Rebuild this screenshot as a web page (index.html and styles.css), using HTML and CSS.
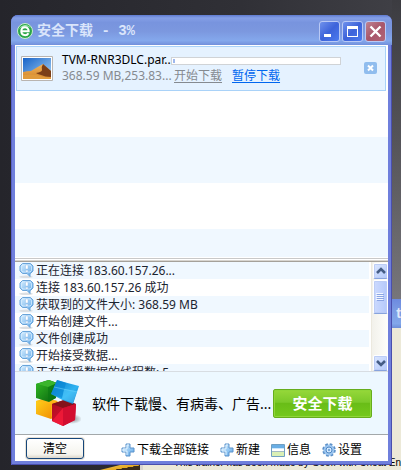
FILE: index.html
```
<!DOCTYPE html>
<html lang="zh-CN">
<head>
<meta charset="utf-8">
<title>安全下载</title>
<link rel="stylesheet" href="styles.css">
</head>
<body>
<svg class="defs" aria-hidden="true">
  <defs>
    <linearGradient id="blue" x1="0" y1="0" x2="1" y2="1"><stop offset="0" stop-color="#d8efff"/><stop offset="1" stop-color="#5ba6e8"/></linearGradient>
    <symbol id="bubble" viewBox="0 0 15 15">
      <ellipse cx="7" cy="13.800" rx="7" ry="1.200" fill="#dcdfe2"/>
      <path d="M3.500.5h8l2.500 2.500v5l-2.500 2.500H11v3l-3-3H3.500L1 8V3z" fill="url(#blue)" stroke="#69a4da"/>
      <path d="M4 2h7l1.500 1.500v4L11 9H4L2.500 7.500v-4z" fill="none" stroke="#d4ecff" stroke-width=".8"/>
      <path d="M6.500 2h2.500v4h-2.500zM6.500 7.200h2.500v1.800h-2.500z" fill="#fff" stroke="#8fb9e2" stroke-width=".4"/>
    </symbol>
    <symbol id="plus" viewBox="0 0 14 14">
      <path d="M5 1h4v4h4v4H9v4H5V9H1V5h4z" fill="url(#blue)" stroke="#5c93cb" stroke-linejoin="round"/>
      <path d="M6 12V8H2V6h4V2h2" fill="none" stroke="#e2f3ff"/>
    </symbol>
  </defs>
</svg>

<div class="back-window" aria-hidden="true">
  <div class="back-title">t</div>
  <div class="back-body"></div>
</div>
<div class="back-note" aria-hidden="true">This trainer has been made by Geoff with Cheat En</div>
<div class="swoosh" aria-hidden="true"></div>

<main class="window">
  <header class="titlebar">
    <svg class="app-icon" viewBox="0 0 16 16">
      <circle cx="8" cy="8" r="7.500" fill="#2ba548" stroke="#c8eed0"/>
      <path d="M2 6a7 7 0 0 1 12-1C10 3 6 3 2 6z" fill="#a2e6ae"/>
      <path d="M4.500 8.200h7.200C11.700 2.800 4.300 3 4.300 8.300c0 4.500 5.400 5 7.200 1.900" fill="none" stroke="#fff" stroke-width="2"/>
    </svg>
    <h1>安全下载 - 3%</h1>
    <div class="caption-buttons">
      <button type="button" class="caption" aria-label="最小化"><svg viewBox="0 0 19 19"><path d="M4 12h7v3H4z" fill="#fff"/></svg></button>
      <button type="button" class="caption" aria-label="最大化"><svg viewBox="0 0 19 19"><path d="M4 4h11v11H4zM5 7v7h9V7z" fill="#fff" fill-rule="evenodd"/></svg></button>
      <button type="button" class="caption close" aria-label="关闭"><svg viewBox="0 0 19 19"><path d="M4.500 4.500l10 10M14.500 4.500l-10 10" stroke="#fff" stroke-width="2.400"/></svg></button>
    </div>
  </header>

  <section class="downloads">
    <article class="item">
      <svg class="thumb" viewBox="0 0 32 26">
        <defs><linearGradient id="sky" x1="0" y1="0" x2="1" y2="1"><stop offset="0" stop-color="#1863c8"/><stop offset="1" stop-color="#a8d4f6"/></linearGradient>
        <linearGradient id="sand" x1="0" y1="0" x2="0" y2="1"><stop offset="0" stop-color="#f3b55c"/><stop offset="1" stop-color="#d08228"/></linearGradient></defs>
        <path d="M.5.5h31v24H.5z" fill="#fff" stroke="#b9b4b0"/>
        <path d="M2 2h28v21H2z" fill="url(#sky)"/>
        <path d="M2 16q4-1 8-1l5-3 7-4 8 7v8H2z" fill="url(#sand)"/>
        <path d="M22 8l8 7v6q-6 0-10-2-4-1-5-2 6-1 6-3-1-3 1-6z" fill="#7b3e17"/>
        <path d="M2 19q8-1 14 0 8 3 14 2v2H2z" fill="#e09a3c"/>
      </svg>
      <div class="names">
        <div class="file">TVM-RNR3DLC.par..</div>
        <div class="size">368.59 MB,253.83...</div>
      </div>
      <div class="state">
        <div class="bar" role="progressbar" aria-valuenow="3" aria-label="下载进度"><div class="fill"></div></div>
        <div class="links"><a class="off" href="#start">开始下载</a><a href="#pause">暂停下载</a></div>
      </div>
      <button type="button" class="remove" aria-label="移除"><svg viewBox="0 0 13 12"><path d="M4 3.500l5 5M9 3.500l-5 5" stroke="#fff" stroke-width="2"/></svg></button>
    </article>
  </section>

  <div class="splitter"></div>

  <section class="log">
    <ul>
      <li><svg><use href="#bubble"/></svg>正在连接 183.60.157.26...</li>
      <li><svg><use href="#bubble"/></svg>连接 183.60.157.26 成功</li>
      <li><svg><use href="#bubble"/></svg>获取到的文件大小: 368.59 MB</li>
      <li><svg><use href="#bubble"/></svg>开始创建文件...</li>
      <li><svg><use href="#bubble"/></svg>文件创建成功</li>
      <li><svg><use href="#bubble"/></svg>开始接受数据...</li>
      <li><svg><use href="#bubble"/></svg>正在接受数据的线程数: 5</li>
    </ul>
    <div class="scrollbar">
      <button type="button" aria-label="向上"><svg viewBox="0 0 14 14"><path d="M3 9l4-4 4 4" fill="none" stroke="#455d85" stroke-width="2.600"/></svg></button>
      <div class="grip"><svg viewBox="0 0 8 9"><path d="M0 .5h7M0 2.500h7M0 4.500h7M0 6.500h7" stroke="#f3f7ff"/><path d="M1 1.500h7M1 3.500h7M1 5.500h7M1 7.500h7" stroke="#8ba5e3"/></svg></div>
      <button type="button" class="down" aria-label="向下"><svg viewBox="0 0 14 14"><path d="M3 5l4 4 4-4" fill="none" stroke="#455d85" stroke-width="2.600"/></svg></button>
    </div>
  </section>

  <section class="promo">
    <svg class="logo" viewBox="0 0 46 48">
      <defs>
        <linearGradient id="lg" x1="0" y1="0" x2="1" y2="1"><stop offset="0" stop-color="#33bc24"/><stop offset="1" stop-color="#08600f"/></linearGradient>
        <linearGradient id="lb" x1="0" y1="0" x2="1" y2="1"><stop offset="0" stop-color="#0877c8"/><stop offset=".6" stop-color="#2fb4f2"/><stop offset="1" stop-color="#0b6fc0"/></linearGradient>
        <linearGradient id="ly" x1="0" y1="0" x2="1" y2="1"><stop offset="0" stop-color="#ffd51c"/><stop offset="1" stop-color="#f08400"/></linearGradient>
        <linearGradient id="lr" x1="0" y1="0" x2="1" y2="1"><stop offset="0" stop-color="#a8101c"/><stop offset="1" stop-color="#ee0c40"/></linearGradient>
        <radialGradient id="ls"><stop offset="0" stop-color="#555" stop-opacity=".7"/><stop offset="1" stop-color="#555" stop-opacity="0"/></radialGradient>
      </defs>
      <ellipse cx="37" cy="40" rx="10" ry="5" fill="url(#ls)"/>
      <path d="M1 22l10-3 11 3 1 14-7 4L1 35z" fill="url(#ly)"/>
      <path d="M1 22l15 3v14L23 22l-12-3z" fill="#ffb91a" opacity=".65"/>
      <path d="M1 5l13-4 8 3-1 15-7 4L1 19z" fill="url(#lg)"/>
      <path d="M1 5l12 3v14l8-3 1-15-9-3z" fill="#087913" opacity=".55"/>
      <path d="M1 5l13-4 8 3-9 4z" fill="#3ab52d"/>
      <path d="M17 25l12-4 12 4-1 16-12 6-11-5z" fill="url(#lr)"/>
      <path d="M17 25l12-4 12 4-13 4z" fill="#84131b"/>
      <path d="M17 42l11-13v18z" fill="#f51d3a" opacity=".8"/>
      <path d="M28 29l13-4-1 16-12 6z" fill="#d20e30"/>
      <path d="M22 1q10 3 22 6l-6 18q-12-4-22-10z" fill="url(#lb)"/>
      <path d="M22 1l9 3-4 15-11-4z" fill="#0785d4" opacity=".6"/>
      <path d="M29 10l13 2-4 12-11-4z" fill="#55ccfb" opacity=".5"/>
      <path d="M19 8l23 5" stroke="#65cefa" stroke-width=".6"/>
    </svg>
    <p>软件下载慢、有病毒、广告...</p>
    <button type="button" class="safe">安全下载</button>
  </section>

  <footer class="toolbar">
    <button type="button" class="clear">清空</button>
    <div class="tools">
      <button type="button" class="tool"><svg><use href="#plus"/></svg>下载全部链接</button>
      <button type="button" class="tool"><svg><use href="#plus"/></svg>新建</button>
      <button type="button" class="tool"><svg viewBox="0 0 14 14"><path d="M.5 1.500h13v12H.5z" fill="#fff" stroke="#6f9fc2"/><path d="M1 2h12v3H1z" fill="#69aee5"/><path d="M1 5.500h12" stroke="#cce7fb"/><path d="M1 9h12v4H1z" fill="#d9efb5"/><path d="M1 8.500h12" stroke="#a3bac4"/></svg>信息</button>
      <button type="button" class="tool"><svg viewBox="0 0 14 14"><circle cx="7" cy="7" r="5.600" fill="#8dbbea" stroke="#5d91c9" stroke-width="2.400" stroke-dasharray="2.600 1.800"/><circle cx="7" cy="7" r="5.200" fill="#9cc6f0"/><circle cx="7" cy="7" r="3" fill="#d9edff" stroke="#5288c5"/><circle cx="7" cy="7" r="1.200" fill="#76a6d8"/></svg>设置</button>
    </div>
  </footer>
</main>
</body>
</html>
```
FILE: styles.css
```
* { box-sizing: border-box; }

body {
  margin: 0;
  height: 100vh;
  padding: 15px 9px 5px 11px;
  overflow: hidden;
  position: relative;
  background: linear-gradient(90deg, #25252b, #303036 60%, #404046);
  font-family: "Noto Sans", "Noto Sans CJK SC", sans-serif;
  font-size: 12px;
  color: #1c2430;
}

body::before {
  content: "";
  position: absolute;
  top: 0;
  right: 0;
  bottom: 0;
  width: 9px;
  background: linear-gradient(#3c3c41, #555459 30%, #77767b 64%);
}

button { font: inherit; padding: 0; margin: 0; color: inherit; }
svg { display: block; flex: none; }
.defs { position: absolute; width: 0; height: 0; }

/* Windows that lie behind the download window */
.back-window {
  position: absolute;
  left: 140px;
  right: 0;
  top: 299px;
  bottom: 0;
  display: flex;
  flex-direction: column;
  overflow: hidden;
  border-left: 3px solid #d9d5cd;
  background: #ece9d8;
}
.back-title {
  height: 29px;
  text-align: right;
  font: bold 14px/29px "Liberation Sans", sans-serif;
  color: #dfe8fa;
  background: linear-gradient(#6d8ae0, #7b9be3 40%, #82a7ea 85%, #6d8ed8);
}
.back-body { flex: 1; }
.back-note {
  position: absolute;
  right: 0;
  bottom: 0;
  white-space: nowrap;
  font: 10px/14px "Liberation Sans", sans-serif;
  color: #000;
}
.swoosh {
  position: absolute;
  left: 100px;
  bottom: 0;
  width: 40px;
  height: 5px;
  background: linear-gradient(170deg, #e8c65c, #e6a91f 60%, #3a2b17 62%);
  clip-path: polygon(0 100%, 50% 0, 100% 0, 100% 100%);
}

.window {
  position: relative;
  height: 100%;
  display: flex;
  flex-direction: column;
  padding: 0 4px 4px;
  border-radius: 7px 7px 0 0;
  background: #6f7fdc;
  box-shadow: inset 1px 0 #5a62c6, inset -1px -1px #4a4fae;
}

.titlebar {
  height: 30px;
  flex: none;
  display: flex;
  align-items: center;
  gap: 4px;
  margin: 0 -4px;
  padding: 2px 6px 0 6px;
  border-radius: 7px 7px 0 0;
  background: linear-gradient(#5f7bd0, #849fe6 10%, #7894de 25%, #7c98df 55%, #84a8ec 85%, #7290dc);
}
.app-icon { width: 16px; height: 16px; }
.titlebar h1 {
  flex: 1;
  margin: 0;
  font: bold 14px/20px "Liberation Mono", "Noto Sans CJK SC", monospace;
  color: #dae5fb;
}
.caption-buttons { display: flex; gap: 2px; }
.caption {
  width: 21px;
  height: 21px;
  border: 1px solid #b9c9f5;
  border-radius: 3px;
  background: linear-gradient(135deg, #6f91ec, #3d63da 50%, #4c7bef);
}
.caption.close { background: linear-gradient(135deg, #c08391, #a8566b 50%, #b26577); }

.downloads {
  flex: 1;
  min-height: 0;
  padding: 1px 2px 0 1px;
  background: repeating-linear-gradient(#fff 0 46px, #f0f8ff 46px 92px) 0 46px no-repeat #fff;
}
.item {
  display: flex;
  height: 45px;
  padding: 0 8px 0 4px;
  border: 1px solid #a9d2f8;
  background: #e5f2ff;
}
.thumb { width: 32px; height: 26px; margin-top: 9px; }
.names { width: 112px; margin: 5px 0 0 9px; white-space: nowrap; line-height: 16px; }
.file { color: #000; }
.size { color: #858a90; }
.state { flex: 1; min-width: 0; padding-top: 10px; }
.bar {
  height: 8px;
  margin: 0 23px 0 -3px;
  border: 1px solid #d0d3d6;
  background: #fff;
}
.fill { width: 2px; height: 4px; margin: 1px; background: #9eb8ee; }
.links { display: flex; gap: 10px; margin-top: 3px; line-height: 16px; white-space: nowrap; }
.links a { color: #0066ef; text-underline-offset: 2px; }
.links .off { color: #858a90; }
.remove {
  width: 13px;
  height: 12px;
  margin-top: 15px;
  border: 0;
  border-radius: 2px;
  background: #90bdee;
}

.splitter {
  height: 5px;
  flex: none;
  background: linear-gradient(#fff 0 1px, #c9c9c9 1px 2px, #fff 2px 3px, #d8d5d0 3px 4px, #a5a19a 4px);
}

.log { height: 109px; flex: none; display: flex; overflow: hidden; background: #fff; }
.log ul { flex: 1; margin: 0 2px 0 0; padding: 0; list-style: none; }
.log li {
  height: 17px;
  padding-left: 4px;
  display: flex;
  align-items: center;
  gap: 2px;
  line-height: 17px;
  white-space: nowrap;
}
.log li:nth-child(odd) { background: #f0f8ff; }
.log li svg { width: 15px; height: 15px; }

.scrollbar {
  width: 17px;
  display: flex;
  flex-direction: column;
  align-items: center;
  gap: 1px;
  padding: 1px 0 0;
  border-left: 1px solid #ece9df;
  background: linear-gradient(90deg, #f2f1eb, #fefefb);
}
.scrollbar button, .grip {
  width: 15px;
  height: 16px;
  flex: none;
  display: grid;
  place-items: center;
  border: 1px solid #fff;
  border-bottom-color: #87a3dd;
  border-radius: 2px;
  background: linear-gradient(135deg, #dce7ff, #b3c9fa);
  box-shadow: inset 0 0 0 1px #bccdf6;
}
.scrollbar svg { width: 14px; height: 14px; }
.scrollbar .grip { height: 34px; background: linear-gradient(90deg, #ccdafe, #b5c9fb); }
.scrollbar .grip svg { width: 8px; height: 9px; }
.scrollbar .down { margin-top: auto; }

.promo {
  height: 63px;
  flex: none;
  display: flex;
  align-items: center;
  padding: 0 16px 0 20px;
  border-top: 1px solid #d8dde2;
  background: #edf8ff;
}
.logo { width: 46px; height: 48px; }
.promo p { flex: 1; margin: 0 0 0 11px; white-space: nowrap; font-size: 14px; color: #000; }
.safe {
  width: 99px;
  height: 29px;
  border: 1px solid #66ad1d;
  border-radius: 2px;
  background: linear-gradient(#96d83a, #7bc92a 45%, #69bd17 50%, #74c91c);
  box-shadow: inset 0 0 0 1px #8fd638;
  font: bold 15px/20px "Noto Sans CJK SC", sans-serif;
  color: #fff;
}

.toolbar {
  height: 27px;
  flex: none;
  display: flex;
  align-items: center;
  justify-content: space-between;
  padding: 0 26px 0 11px;
  border-top: 1px solid #a3a8aa;
  background: #fff;
  color: #000;
}
.clear {
  width: 58px;
  height: 21px;
  border: 1px solid #17467a;
  border-radius: 3px;
  background: linear-gradient(#fff, #f5f4ee 80%, #dcd6ca);
  box-shadow: 0 0 0 1px #e6e2d8;
}
.tools { display: flex; gap: 11px; padding-top: 3px; }
.tool {
  display: flex;
  align-items: center;
  gap: 2px;
  border: 0;
  background: none;
  line-height: 16px;
  white-space: nowrap;
}
.tool svg { width: 14px; height: 14px; }
```
